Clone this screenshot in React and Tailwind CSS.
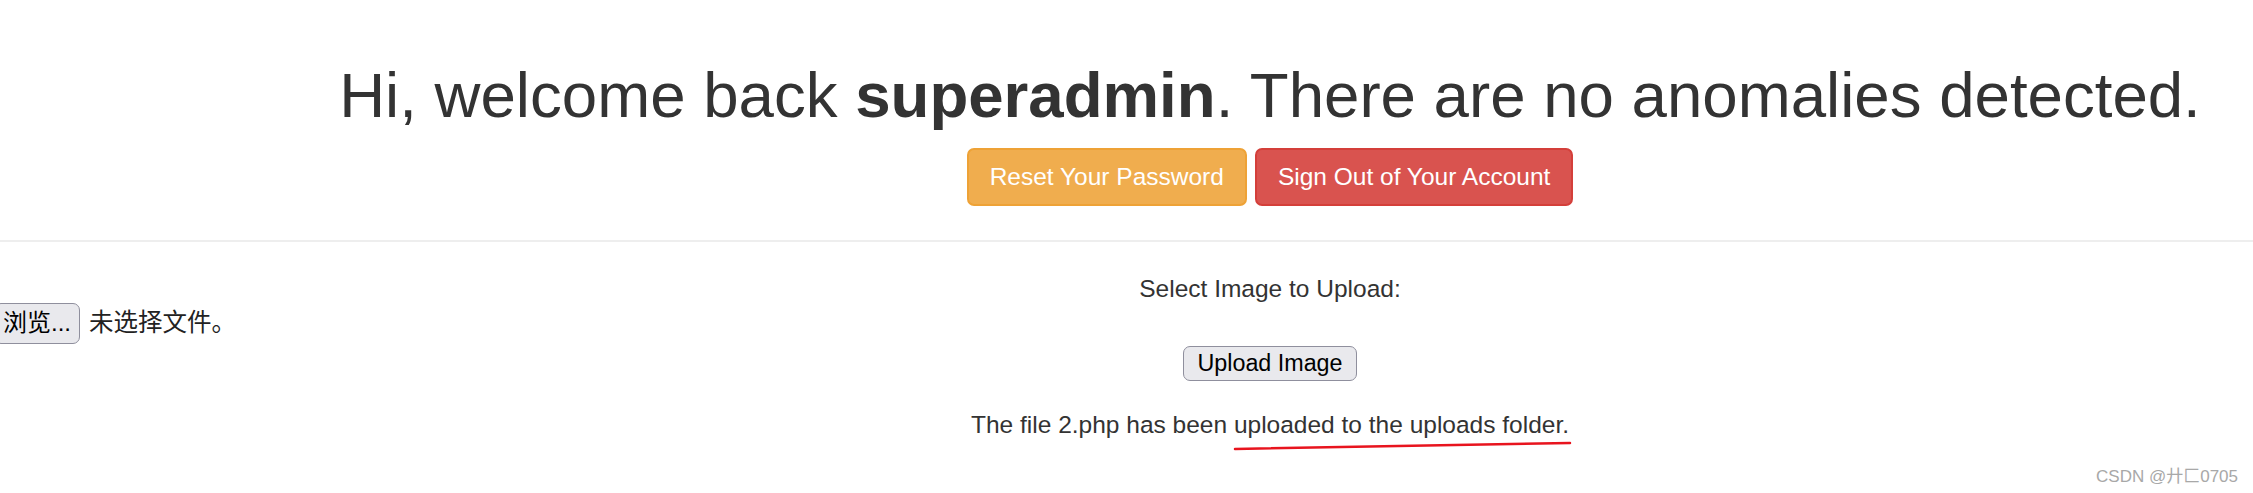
import React from "react";

function FakeFileInput() {
  return (
    <div className="ml-[-6px] flex h-[41px] items-center">
      <span className="inline-flex h-[41px] w-[86px] items-center justify-center rounded-[7px] border border-[#8f8f9d] bg-[#e9e9ed] text-[24px] leading-none text-black">
        浏览...
      </span>
      <span className="ml-[9px] text-[24.5px] leading-none text-[#222]">未选择文件。</span>
    </div>
  );
}

export default function App() {
  return (
    <div className="relative h-[493px] w-full overflow-hidden bg-white font-['Liberation_Sans','Noto_Sans_CJK_SC',sans-serif] text-[#333]">
      <div className="flex flex-col items-center pl-[287px] pt-[60px]">
        <h1 className="whitespace-nowrap text-[63.6px] font-normal leading-[1.1]">
          Hi, welcome back <b className="font-bold">superadmin</b>. There are no anomalies detected.
        </h1>
        <div className="mt-[18px] flex gap-[8px]">
          <button className="inline-flex h-[58px] items-center justify-center rounded-[7px] border-2 border-[#eea236] bg-[#f0ad4e] px-[21px] text-[24.5px] text-white">
            Reset Your Password
          </button>
          <button className="inline-flex h-[58px] items-center justify-center rounded-[7px] border-2 border-[#d43f3a] bg-[#d9534f] px-[21px] text-[24.5px] text-white">
            Sign Out of Your Account
          </button>
        </div>
      </div>

      <hr className="mt-[34px] border-0 border-t-2 border-[#eeeeee]" />

      <form className="flex flex-col">
        <div className="mt-[33px] pl-[287px] text-center text-[24.5px] leading-[28px]">
          Select Image to Upload:
        </div>
        <FakeFileInput />
        <div className="mt-[2px] flex justify-center pl-[287px]">
          <button
            type="button"
            className="inline-flex h-[35px] items-center justify-center rounded-[7px] border border-[#8f8f9d] bg-[#e9e9ed] px-[13px] text-[23.3px] text-black"
          >
            Upload Image
          </button>
        </div>
        <div className="mt-[26px] pl-[287px] text-center text-[24.5px] leading-[35px]">
          The file 2.php has been{" "}
          <span className="relative">
            uploaded to the uploads folder.
            <svg
              className="absolute left-0 top-full mt-[3px] h-[10px] w-[338px] overflow-visible"
              viewBox="0 0 338 10"
              fill="none"
            >
              <path d="M1 8 C 90 7, 200 5, 336 2" stroke="#e8141e" strokeWidth="2.5" strokeLinecap="round" />
            </svg>
          </span>
        </div>
      </form>

      <div className="absolute bottom-[6px] right-[15px] text-[17px] leading-[20px] text-[#a8a8a8]">
        CSDN @廾匚0705
      </div>
    </div>
  );
}
